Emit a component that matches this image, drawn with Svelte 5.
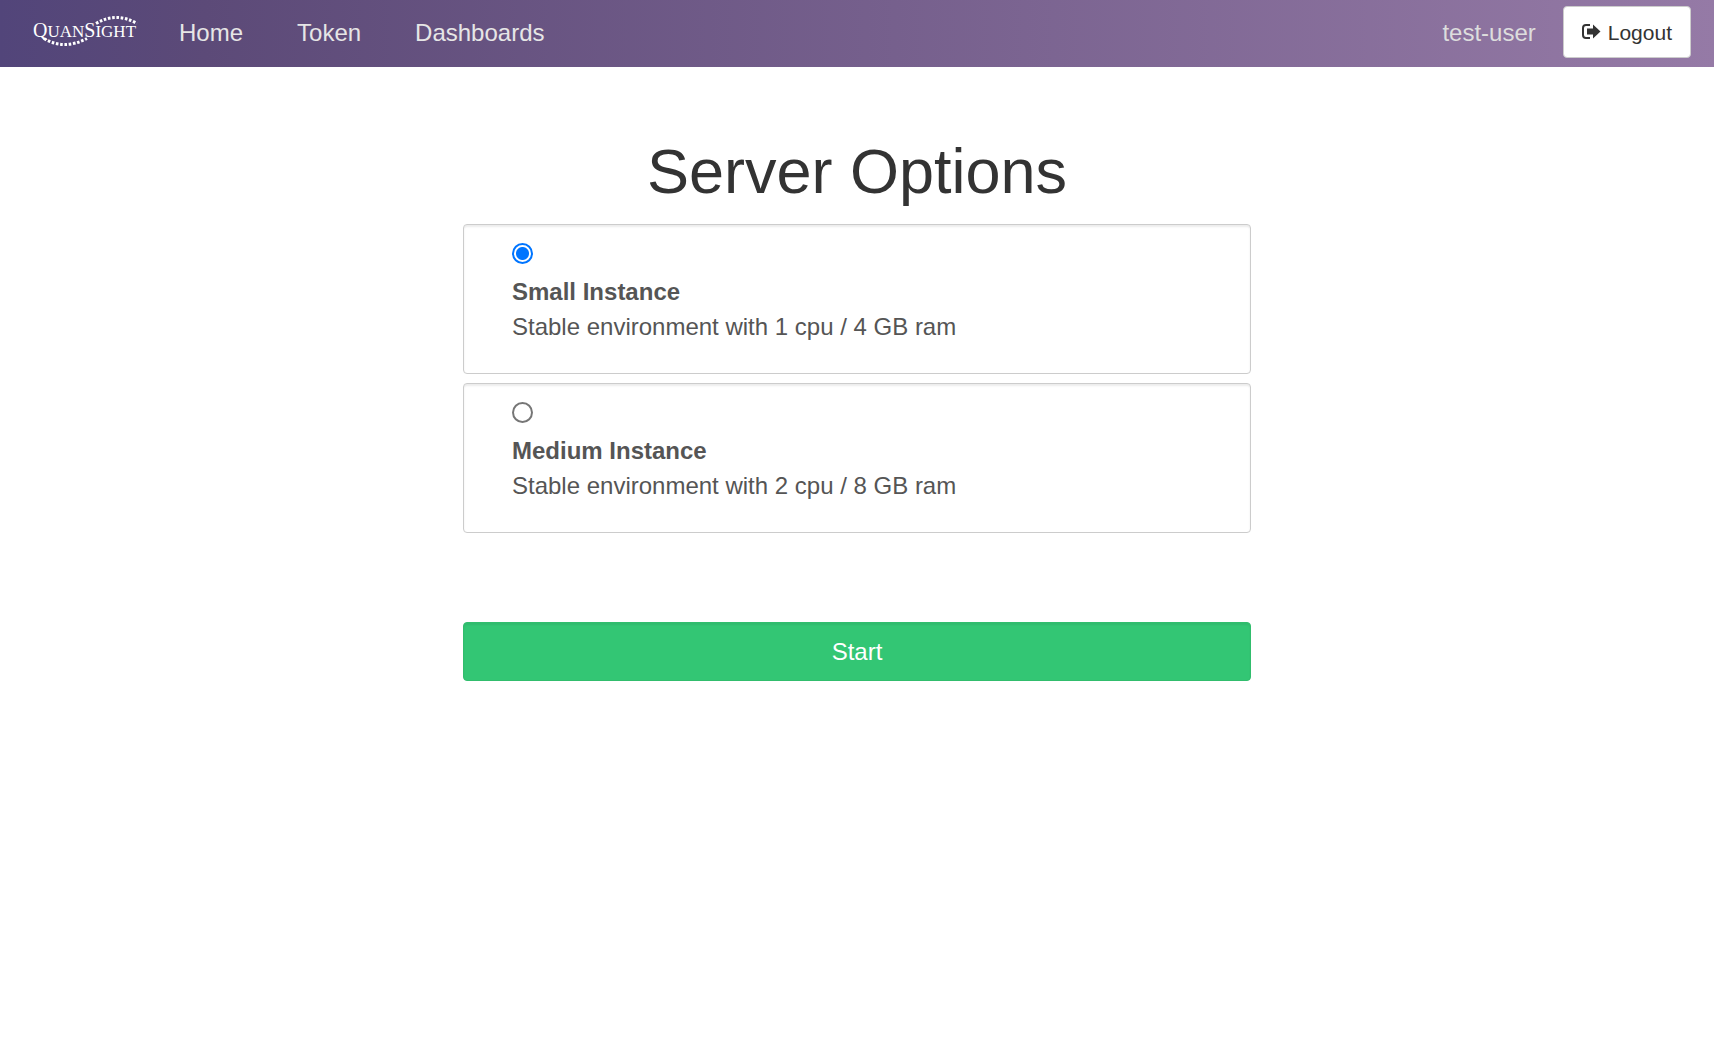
<script>
  let size = $state('small');
  const links = ['Home', 'Token', 'Dashboards'];
  const profiles = [
    { id: 'small', name: 'Small Instance', text: 'Stable environment with 1 cpu / 4 GB ram' },
    { id: 'medium', name: 'Medium Instance', text: 'Stable environment with 2 cpu / 8 GB ram' }
  ];
</script>

<header class="navbar">
  <a class="brand" href="#home" aria-label="QuanSight">
    <svg viewBox="0 0 106 34" width="106" height="34">
      <text x="0" y="22"><tspan class="cap">Q</tspan>UAN<tspan class="cap">S</tspan>IGHT</text>
      <path d="M11 23.5Q31 35.5 54 23.5" />
      <path d="M63 8.5Q83 -3.5 104 8.5" />
    </svg>
  </a>
  <nav>
    {#each links as link}
      <a href="#{link.toLowerCase()}">{link}</a>
    {/each}
  </nav>
  <span class="user">test-user</span>
  <a class="logout" href="#logout">
    <svg viewBox="0 0 18 16" width="18" height="16" aria-hidden="true">
      <path class="door" d="M8 1H4Q1 1 1 4V11Q1 14 4 14H8" />
      <path d="M5 4.5H11V0.5L18.5 7.5L11 14.5V10.5H5Z" />
    </svg>
    Logout
  </a>
</header>

<main>
  <h1>Server Options</h1>
  <form onsubmit={(e) => e.preventDefault()}>
    <div class="profiles">
      {#each profiles as p}
        <label class="profile">
          <input type="radio" name="profile" value={p.id} bind:group={size} />
          <strong>{p.name}</strong>
          <span>{p.text}</span>
        </label>
      {/each}
    </div>
    <button type="submit">Start</button>
  </form>
</main>

<style>
  :global(body) {
    background: #fff;
    color: #333;
    font: 24px/35px "Liberation Sans", Arial, sans-serif;
  }
  .navbar {
    display: flex;
    align-items: center;
    box-sizing: border-box;
    min-height: 67px;
    padding: 0 23px 3px 33px;
    background: linear-gradient(90deg, #52457a, #5c4a78 12%, #957aa6);
  }
  .navbar a { text-decoration: none; }
  .brand { display: flex; }
  .brand text {
    fill: #fff;
    font-family: "Liberation Serif", serif;
    font-size: 17px;
  }
  .brand .cap { font-size: 20px; }
  .brand path {
    fill: none;
    stroke: #fff;
    stroke-width: 3;
    stroke-dasharray: 2.6 1.7;
  }
  nav {
    display: flex;
    gap: 54px;
    margin-left: 40px;
  }
  nav a, .user { color: #e6e6e6; }
  .user { margin-left: auto; color: #ddd; }
  .logout {
    display: flex;
    align-items: center;
    gap: 8px;
    box-sizing: border-box;
    height: 52px;
    margin-left: 27px;
    padding: 0 18px;
    border: 1px solid #ccc;
    border-radius: 4px;
    background: #fff;
    color: #333;
    font-size: 21px;
  }
  .logout svg { fill: #333; overflow: visible; }
  .logout .door { fill: none; stroke: #333; stroke-width: 2; }
  main {
    box-sizing: border-box;
    max-width: 788px;
    margin: 0 auto;
    padding-top: 70px;
  }
  h1 {
    margin: 0 0 18px;
    font-size: 63px;
    font-weight: 400;
    line-height: 69px;
    text-align: center;
  }
  .profiles { display: grid; gap: 9px; }
  .profile {
    display: flex;
    flex-direction: column;
    box-sizing: border-box;
    min-height: 150px;
    padding: 18px 48px 28px;
    border: 1px solid #ccc;
    border-radius: 4px;
    box-shadow: inset 0 2px 2px rgba(0, 0, 0, 0.08);
    color: #555;
  }
  input {
    appearance: none;
    box-sizing: border-box;
    width: 21px;
    height: 21px;
    margin: 0 0 10px;
    border: 2px solid #767676;
    border-radius: 50%;
    background: #fff;
  }
  input:checked {
    border-color: #0075ff;
    background: radial-gradient(circle, #0075ff 6px, #fff 7px);
  }
  button {
    width: 100%;
    height: 59px;
    margin-top: 89px;
    border: 1px solid #31bd6d;
    border-radius: 4px;
    background: #33c674;
    box-shadow: inset 0 2px 2px rgba(0, 0, 0, 0.06);
    color: #fff;
    font: inherit;
  }
</style>
